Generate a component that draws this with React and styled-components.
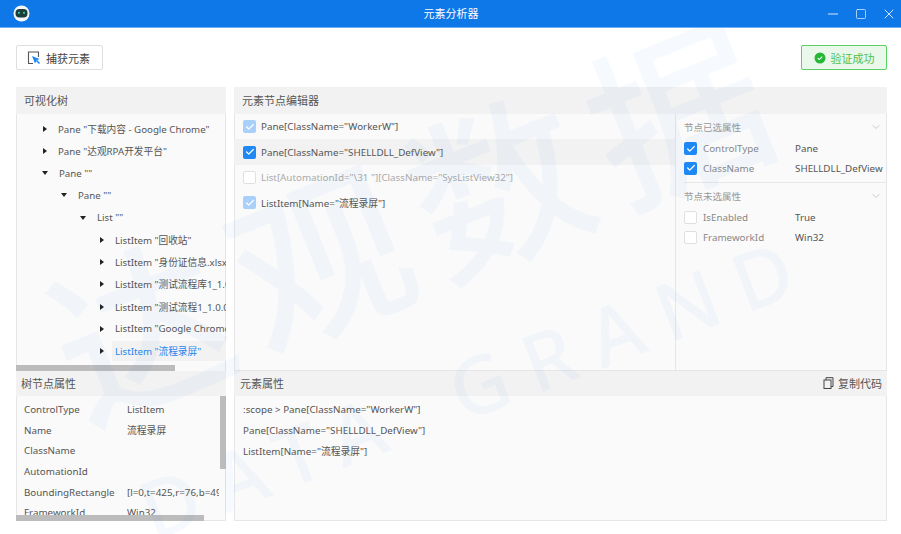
import React from 'react';
import styled, { createGlobalStyle } from 'styled-components';
import { Minus, Square, X, ChevronDown, Check } from 'lucide-react';

const GlobalStyle = createGlobalStyle`
    html, body {
        margin: 0;
        padding: 0;
        background: #fff;
    }
    body {
        font-family: "Noto Sans", "Noto Sans CJK SC", sans-serif;
        font-size: 9.8px;
        color: #555;
    }
`
const Page = styled.div`
    position: relative;
    width: 901px;
    height: 534px;
    overflow: hidden;
    background: #fff;
`
const TitleBar = styled.div`
    height: 27px;
    background: #0f78e8;
    border-bottom: 1px solid #6fb1f3;
    display: flex;
    align-items: center;
    padding: 0 4px 0 13px;
`
const TitleText = styled.div`
    flex: 1;
    text-align: center;
    color: #fff;
    font-size: 11px;
    padding-left: 47px;
    margin-top: -1px;
`
const WindowButtons = styled.div`
    display: flex;
    align-items: center;
    gap: 14px;
    color: #e4f0ff;
`
const Toolbar = styled.div`
    display: flex;
    justify-content: space-between;
    padding: 17px 14px 17px 16px;
`
const ToolButton = styled.div`
    height: 25px;
    width: 87px;
    box-sizing: border-box;
    display: flex;
    align-items: center;
    justify-content: center;
    gap: 5px;
    padding-right: 2px;
    border: 1px solid #dedede;
    border-radius: 2px;
    color: #444;
    font-size: 11px;
`
const SuccessButton = styled(ToolButton)`
    width: 86px;
    padding-right: 0;
    border-color: #5ad162;
    background: #e9f8ea;
    color: #4cc153;
`
const Main = styled.div`
    display: flex;
    gap: 8px;
    padding: 0 14px 0 16px;
`
const Panel = styled.div`
    flex: none;
    width: ${props => props.width};
    height: 434px;
    display: flex;
    flex-direction: column;
    background: #fafafa;
    box-shadow: 0 0 0 1px #e6e6e6 inset;
    overflow: hidden;
`
const PanelHeader = styled.div`
    flex: none;
    height: ${props => props.height || '27px'};
    box-sizing: border-box;
    padding: 0 5px 2px ${props => props.left || '8px'};
    display: flex;
    align-items: center;
    justify-content: space-between;
    background: #f2f2f2;
    color: #555;
    font-size: 11px;
`
const TreeArea = styled.div`
    position: relative;
    height: 257px;
    flex: none;
    overflow: hidden;
    padding-top: 3.6px;
    box-sizing: border-box;
`
const TreeRow = styled.div`
    height: 22.25px;
    display: flex;
    align-items: center;
    padding-left: ${props => props.depth * 19 + 27}px;
    white-space: nowrap;
    font-size: 9.7px;
`
const Caret = styled.span`
    flex: none;
    width: 0;
    height: 0;
    margin-right: 11px;
    border-style: solid;
    border-color: transparent;
    border-width: ${props => (props.open ? '4px 3px 0 3px' : '3px 0 3px 4px')};
    border-top-color: ${props => (props.open ? '#222' : 'transparent')};
    border-left-color: ${props => (props.open ? 'transparent' : '#222')};
    margin-left: ${props => (props.open ? '-1px' : '0')};
`
const TreeLabel = styled.span`
    padding: 3px 0 3px 3px;
    margin-left: -3px;
    color: ${props => (props.selected ? '#1d87ee' : '#555')};
    background: ${props => (props.selected ? '#f2f2f2' : 'transparent')};
    flex: ${props => (props.selected ? '1' : 'none')};
`
const HScrollTrack = styled.div`
    position: absolute;
    left: 0;
    bottom: 0;
    width: ${props => props.width}px;
    height: 6px;
    background: #bcbcbc;
`
const VScroll = styled.div`
    position: absolute;
    right: 0;
    top: 0;
    width: 6px;
    height: 73px;
    background: #bcbcbc;
`
const PropsArea = styled.div`
    position: relative;
    flex: 1;
    overflow: hidden;
    padding-top: 3px;
`
const PropRow = styled.div`
    height: 20.7px;
    display: grid;
    grid-template-columns: 103px 92px;
    align-items: center;
    padding-left: 8px;
    white-space: nowrap;
    overflow: hidden;
`
const ValueCell = styled.span`
    overflow: hidden;
`
const EditorBody = styled.div`
    height: 256px;
    flex: none;
    display: flex;
    border-bottom: 1px solid #e6e6e6;
`
const NodeList = styled.div`
    flex: 1;
`
const NodeRow = styled.div`
    height: 25.4px;
    display: flex;
    align-items: center;
    gap: 5px;
    padding-left: 9px;
    background: ${props => (props.active ? '#f2f2f2' : 'transparent')};
    color: ${props => (props.muted ? '#aaa' : '#555')};
`
const Box = styled.span`
    flex: none;
    width: 13px;
    height: 13px;
    box-sizing: border-box;
    border-radius: 2px;
    display: flex;
    align-items: center;
    justify-content: center;
    border: 1px solid ${props => (props.state === 'empty' ? '#e0e0e0' : 'transparent')};
    background: ${props =>
        props.state === 'on' ? '#1e88f5' : props.state === 'faded' ? '#a9d0fa' : '#fff'};
    color: #fff;
`
const SidePanel = styled.div`
    width: 212px;
    flex: none;
    border-left: 1px solid #e6e6e6;
    padding: 3px 0 0 8px;
    box-sizing: border-box;
`
const SideSection = styled.div`
    padding-bottom: ${props => (props.last ? '0' : '4px')};
    border-bottom: ${props => (props.last ? 'none' : '1px solid #e8e8e8')};
    margin-bottom: 3px;
`
const SideTitle = styled.div`
    height: 19px;
    display: flex;
    align-items: center;
    justify-content: space-between;
    padding-right: 5px;
    color: #999;
    font-size: 9.5px;
    margin-bottom: 3px;
`
const AttrRow = styled.div`
    height: 19.5px;
    display: grid;
    grid-template-columns: 13px 86px auto;
    column-gap: 6px;
    align-items: center;
    white-space: nowrap;
`
const AttrName = styled.span`
    color: #888;
`
const CopyAction = styled.div`
    display: flex;
    align-items: center;
    gap: 4px;
    color: #555;
    font-size: 11px;
`
const CodeArea = styled.div`
    padding: 3px 0 0 9px;
`
const CodeLine = styled.div`
    height: 20.7px;
    display: flex;
    align-items: center;
`
const Watermark = styled.div`
    position: absolute;
    left: ${props => props.left}px;
    top: ${props => props.top}px;
    font-size: ${props => props.size}px;
    letter-spacing: ${props => props.spacing}px;
    word-spacing: 15px;
    line-height: 1;
    white-space: nowrap;
    color: rgba(15, 120, 232, 0.04);
    transform: rotate(${props => props.angle}deg);
    transform-origin: left top;
    font-weight: 500;
    pointer-events: none;
`

const treeRows = [
    { depth: 0, label: 'Pane "下载内容 - Google Chrome"' },
    { depth: 0, label: 'Pane "达观RPA开发平台"' },
    { depth: 0, label: 'Pane ""', open: true },
    { depth: 1, label: 'Pane ""', open: true },
    { depth: 2, label: 'List ""', open: true },
    { depth: 3, label: 'ListItem "回收站"' },
    { depth: 3, label: 'ListItem "身份证信息.xlsx"' },
    { depth: 3, label: 'ListItem "测试流程库1_1.0.0"' },
    { depth: 3, label: 'ListItem "测试流程1_1.0.0"' },
    { depth: 3, label: 'ListItem "Google Chrome"' },
    { depth: 3, label: 'ListItem "流程录屏"', selected: true },
]

const nodeProps = [
    ['ControlType', 'ListItem'],
    ['Name', '流程录屏'],
    ['ClassName', ''],
    ['AutomationId', ''],
    ['BoundingRectangle', '[l=0,t=425,r=76,b=498]'],
    ['FrameworkId', 'Win32'],
]

const CheckBox = ({ state }) => (
    <Box state={state}>
        {state !== 'empty' && <Check size={10} strokeWidth={3} />}
    </Box>
)

const CaptureIcon = () => (
    <svg width="14" height="14" viewBox="0 0 14 14" fill="none">
        <path d="M6 12.5H1.5V1H11.5V6" stroke="#555" strokeWidth="1.1" />
        <path d="M5 5L12.5 8L9.5 9.5L8 12.5Z" fill="#1e88f5" />
        <path d="M9.5 9.5L12.5 12.5" stroke="#1e88f5" strokeWidth="1.6" />
    </svg>
)

const SuccessIcon = () => (
    <svg width="12" height="12" viewBox="0 0 12 12">
        <circle cx="6" cy="6" r="5.5" fill="#27b737" />
        <path d="M3.7 6.1L5.3 7.6L8.3 4.6" stroke="#fff" strokeWidth="1.1" fill="none" />
    </svg>
)

const CopyIcon = () => (
    <svg width="11" height="12" viewBox="0 0 11 12" fill="none" stroke="#444" strokeWidth="1">
        <rect x="1" y="3" width="7" height="8.5" />
        <path d="M3 3V0.7H10V9.5H8" />
    </svg>
)

const Logo = () => (
    <svg width="17" height="17" viewBox="0 0 17 17">
        <circle cx="8.5" cy="8.5" r="8" fill="#f4f7f6" />
        <rect x="2.5" y="4" width="12" height="8.5" rx="4" fill="#1c3d3a" />
        <circle cx="6" cy="7.8" r="1.1" fill="#39c7a8" />
        <circle cx="11" cy="7.8" r="1.1" fill="#39c7a8" />
    </svg>
)

const App = () => {
    return (
        <Page>
            <GlobalStyle />
            <TitleBar>
                <Logo />
                <TitleText>元素分析器</TitleText>
                <WindowButtons>
                    <Minus size={16} strokeWidth={1.4} />
                    <Square size={12} strokeWidth={1.4} />
                    <X size={16} strokeWidth={1.4} />
                </WindowButtons>
            </TitleBar>
            <Toolbar>
                <ToolButton>
                    <CaptureIcon />
                    捕获元素
                </ToolButton>
                <SuccessButton>
                    <SuccessIcon />
                    验证成功
                </SuccessButton>
            </Toolbar>
            <Main>
                <Panel width="210px">
                    <PanelHeader>可视化树</PanelHeader>
                    <TreeArea>
                        {treeRows.map(row => (
                            <TreeRow key={row.label + row.depth} depth={row.depth}>
                                <Caret open={row.open} />
                                <TreeLabel selected={row.selected}>{row.label}</TreeLabel>
                            </TreeRow>
                        ))}
                        <HScrollTrack width={159} />
                    </TreeArea>
                    <PanelHeader height="25px" left="5px">树节点属性</PanelHeader>
                    <PropsArea>
                        {nodeProps.map(([name, value]) => (
                            <PropRow key={name}>
                                <span>{name}</span>
                                <ValueCell>{value}</ValueCell>
                            </PropRow>
                        ))}
                        <VScroll />
                        <HScrollTrack width={188} />
                    </PropsArea>
                </Panel>
                <Panel width="653px">
                    <PanelHeader>元素节点编辑器</PanelHeader>
                    <EditorBody>
                        <NodeList>
                            <NodeRow>
                                <CheckBox state="faded" />
                                Pane[ClassName="WorkerW"]
                            </NodeRow>
                            <NodeRow active>
                                <CheckBox state="on" />
                                Pane[ClassName="SHELLDLL_DefView"]
                            </NodeRow>
                            <NodeRow muted>
                                <CheckBox state="empty" />
                                List[AutomationId="\31 "][ClassName="SysListView32"]
                            </NodeRow>
                            <NodeRow>
                                <CheckBox state="faded" />
                                ListItem[Name="流程录屏"]
                            </NodeRow>
                        </NodeList>
                        <SidePanel>
                            <SideSection>
                                <SideTitle>
                                    节点已选属性
                                    <ChevronDown size={12} strokeWidth={1} color="#999" />
                                </SideTitle>
                                <AttrRow>
                                    <CheckBox state="on" />
                                    <AttrName>ControlType</AttrName>
                                    <span>Pane</span>
                                </AttrRow>
                                <AttrRow>
                                    <CheckBox state="on" />
                                    <AttrName>ClassName</AttrName>
                                    <span>SHELLDLL_DefView</span>
                                </AttrRow>
                            </SideSection>
                            <SideSection last>
                                <SideTitle>
                                    节点未选属性
                                    <ChevronDown size={12} strokeWidth={1} color="#999" />
                                </SideTitle>
                                <AttrRow>
                                    <CheckBox state="empty" />
                                    <AttrName>IsEnabled</AttrName>
                                    <span>True</span>
                                </AttrRow>
                                <AttrRow>
                                    <CheckBox state="empty" />
                                    <AttrName>FrameworkId</AttrName>
                                    <span>Win32</span>
                                </AttrRow>
                            </SideSection>
                        </SidePanel>
                    </EditorBody>
                    <PanelHeader height="25px" left="6px">
                        元素属性
                        <CopyAction>
                            <CopyIcon />
                            复制代码
                        </CopyAction>
                    </PanelHeader>
                    <CodeArea>
                        <CodeLine>:scope &gt; Pane[ClassName="WorkerW"]</CodeLine>
                        <CodeLine>Pane[ClassName="SHELLDLL_DefView"]</CodeLine>
                        <CodeLine>ListItem[Name="流程录屏"]</CodeLine>
                    </CodeArea>
                </Panel>
            </Main>
            <Watermark left={27} top={282} size={175} spacing={18} angle={-22}>达观数据</Watermark>
            <Watermark left={128} top={475} size={80} spacing={20} angle={-21}>DATA GRAND</Watermark>
        </Page>
    )
}

export default App;
